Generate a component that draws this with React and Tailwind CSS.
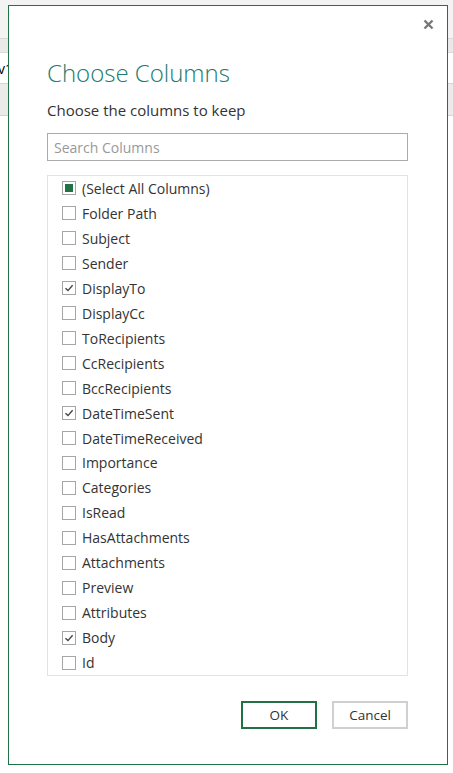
import { useState } from "react"

const columns = [
  ["Folder Path", false],
  ["Subject", false],
  ["Sender", false],
  ["DisplayTo", true],
  ["DisplayCc", false],
  ["ToRecipients", false],
  ["CcRecipients", false],
  ["BccRecipients", false],
  ["DateTimeSent", true],
  ["DateTimeReceived", false],
  ["Importance", false],
  ["Categories", false],
  ["IsRead", false],
  ["HasAttachments", false],
  ["Attachments", false],
  ["Preview", false],
  ["Attributes", false],
  ["Body", true],
  ["Id", false],
]

function Box({ state }) {
  return (
    <span className="w-[14px] h-[14px] border border-[#a6a6a6] bg-white flex items-center justify-center shrink-0">
      {state === "partial" && <span className="w-[8px] h-[8px] bg-[#217346]" />}
      {state === true && (
        <svg width="10" height="10" viewBox="0 0 10 10">
          <path d="M1.5 5.2 L4 7.6 L8.6 2.2" fill="none" stroke="#444" strokeWidth="1.4" />
        </svg>
      )}
    </span>
  )
}

function Row({ label, state }) {
  return (
    <div className="h-[25px] flex items-center gap-[6px] pl-[14px]">
      <Box state={state} />
      <span className="text-[14px] text-[#333]">{label}</span>
    </div>
  )
}

export default function App() {
  const [items] = useState(columns)
  return (
    <div className="relative w-[453px] h-[773px] bg-white overflow-hidden" style={{ fontFamily: '"Open Sans", "Noto Sans", sans-serif' }}>
      {/* background app behind dialog */}
      <div className="absolute inset-0 flex flex-col">
        <div className="h-[38px] bg-[#f3f3f3]" />
        <div className="h-[15px] bg-[#e9e9e9] border-y border-[#d9d9d9]" />
        <div className="h-[30px] bg-white flex items-center text-[14px] text-black -ml-[2px]">v1</div>
        <div className="h-[33px] bg-[#ebebeb] border-y border-[#d4d4d4]" />
        <div className="flex-1 bg-white" />
      </div>

      <div className="absolute left-[8px] top-[5px] w-[440px] h-[760px] bg-white border border-[#217346] flex flex-col">
        <div className="flex justify-end pr-[13px] pt-[13px] h-[40px]">
          <svg width="11" height="11" viewBox="0 0 11 11">
            <path d="M1.5 1.5 L9.5 9.5 M9.5 1.5 L1.5 9.5" stroke="#777" strokeWidth="2.4" />
          </svg>
        </div>
        <div className="pl-[38px] pr-[39px] flex flex-col">
          <h1 className="text-[24px] font-light text-[#217a6e] leading-[30px] mt-[12px]">Choose Columns</h1>
          <p className="text-[15px] text-[#333] mt-[12px] leading-[20px]">Choose the columns to keep</p>
          <div className="mt-[13px] h-[28px] border border-[#ababab] flex items-center px-[6px] text-[14px] text-[#999]">
            Search Columns
          </div>
          <div className="mt-[14px] h-[501px] border border-[#e3e3e3] flex flex-col">
            <Row label="(Select All Columns)" state="partial" />
            {items.map(([label, on]) => (
              <Row key={label} label={label} state={on} />
            ))}
          </div>
          <div className="flex justify-end gap-[15px] mt-[25px]">
            <button className="w-[76px] h-[28px] border-2 border-[#217346] text-[13.5px] text-[#333] bg-white">OK</button>
            <button className="w-[76px] h-[28px] border-2 border-[#d0d0d0] text-[13.5px] text-[#333] bg-white">Cancel</button>
          </div>
        </div>
      </div>
    </div>
  )
}
